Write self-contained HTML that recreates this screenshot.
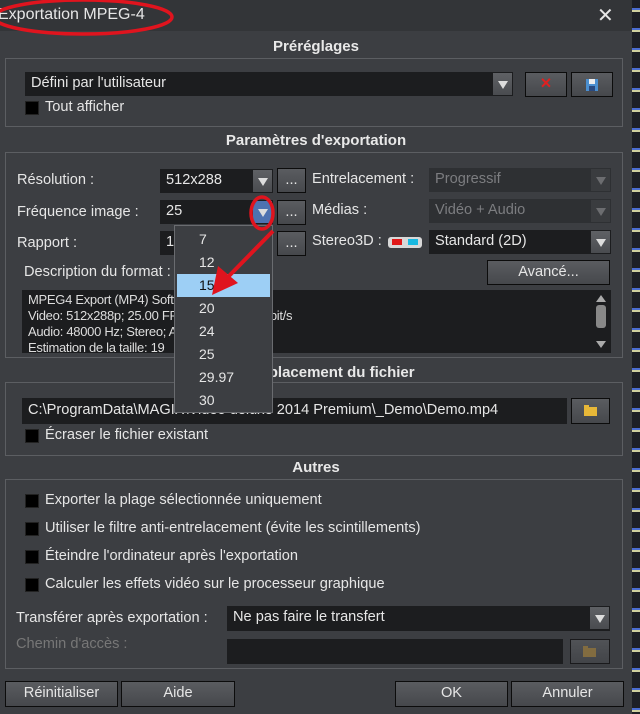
<!DOCTYPE html>
<html><head><meta charset="utf-8"><style>
*{box-sizing:border-box;margin:0;padding:0}
body{width:640px;height:714px;background:#1d1f26;position:relative;overflow:hidden;font-family:"Liberation Sans Narrow","Liberation Sans",sans-serif;font-size:14.6px;color:#e6e6e6}
.a{position:absolute}
#dlg{left:0;top:0;width:632px;height:714px;background:#3c3e42}
#tb{left:0;top:0;width:632px;height:31px;background:#333538}
.h{position:absolute;left:0;width:632px;text-align:center;font-weight:bold;font-size:15px;color:#e8e8e8}
.g{position:absolute;left:5px;width:618px;border:1px solid #5c5e62}
.in{position:absolute;background:#1c1d1f;color:#e6e6e6;padding-left:6px;line-height:23px;height:24px;white-space:nowrap;overflow:hidden}
.dis{background:#2e3033;color:#7c7d80}
.ar{position:absolute;top:1px;right:1px;width:19px;height:22px;background:linear-gradient(#5f6165,#4a4c50);}
.ar:after{content:"";position:absolute;left:5px;top:8px;border-left:5px solid transparent;border-right:5px solid transparent;border-top:8px solid #ddd}
.dis .ar{background:#3a3c3f}.dis .ar:after{border-top-color:#6c6d70}
.bt{position:absolute;background:linear-gradient(#5a5c60,#46484c);border:1px solid #0c0c0c;color:#e6e6e6;text-align:center;line-height:22px;height:25px}
.cb{position:absolute;width:14px;height:14px;background:#000;border:1px solid #222}
.l{position:absolute;white-space:nowrap}
</style></head><body>
<div class="a" style="left:632px;top:0;width:8px;height:714px;background:repeating-linear-gradient(#1d1f26 0 8px,#4a6cd0 8px 10px,#d0d0a0 10px 12px,#1d1f26 12px 20px)"></div>
<div id="dlg" class="a"></div>
<div id="tb" class="a"></div>
<div class="l" style="left:-2px;top:6px;font-size:16px">Exportation MPEG-4</div>
<div class="l" style="left:597px;top:3px;font-size:20px;font-family:'Liberation Sans'">✕</div>

<div class="h" style="top:38px">Préréglages</div>
<div class="g" style="top:58px;height:69px"></div>
<div class="in" style="left:25px;top:72px;width:488px">Défini par l'utilisateur<div class="ar"></div></div>
<div class="bt" style="left:525px;top:72px;width:42px;color:#e02020;font-family:'Liberation Sans';font-weight:bold">✕</div>
<div class="bt" style="left:571px;top:72px;width:42px"><svg width="14" height="14" style="margin-top:5px"><rect x="1" y="1" width="12" height="12" fill="#4b8fd0"/><rect x="4" y="1" width="6" height="5" fill="#eee"/><rect x="4" y="8" width="6" height="5" fill="#2a4a80"/></svg></div>
<div class="cb" style="left:25px;top:101px"></div><div class="l" style="left:45px;top:99px">Tout afficher</div>

<div class="h" style="top:132px">Paramètres d'exportation</div>
<div class="g" style="top:152px;height:206px"></div>

<div class="l" style="left:17px;top:172px">Résolution :</div>
<div class="in" style="left:160px;top:169px;width:113px">512x288<div class="ar"></div></div>
<div class="bt" style="left:277px;top:168px;width:29px">...</div>
<div class="l" style="left:312px;top:171px">Entrelacement :</div>
<div class="in dis" style="left:429px;top:168px;width:182px">Progressif<div class="ar"></div></div>

<div class="l" style="left:17px;top:204px">Fréquence image :</div>
<div class="in" style="left:160px;top:200px;width:113px">25<div class="ar" style="background:#4e72b0"></div></div>
<div class="bt" style="left:277px;top:200px;width:29px">...</div>
<div class="l" style="left:312px;top:202px">Médias :</div>
<div class="in dis" style="left:429px;top:199px;width:182px">Vidéo + Audio<div class="ar"></div></div>

<div class="l" style="left:17px;top:235px">Rapport :</div>
<div class="in" style="left:160px;top:231px;width:113px">16:9<div class="ar"></div></div>
<div class="bt" style="left:277px;top:231px;width:29px">...</div>
<div class="l" style="left:312px;top:233px">Stereo3D :</div>
<svg class="a" style="left:388px;top:236px" width="34" height="14"><rect x="0" y="1" width="34" height="11" rx="3" fill="#d8d8d8"/><rect x="4" y="3" width="10" height="6" fill="#e01818"/><rect x="20" y="3" width="10" height="6" fill="#18b8e0"/></svg>
<div class="in" style="left:429px;top:230px;width:182px">Standard (2D)<div class="ar"></div></div>

<div class="l" style="left:24px;top:264px">Description du format :</div>
<div class="bt" style="left:487px;top:260px;width:123px">Avancé...</div>
<div class="in" style="left:22px;top:290px;width:572px;height:63px;font-family:'Liberation Sans';font-size:13px;line-height:16px;padding-top:2px;color:#ddd;letter-spacing:-0.3px">MPEG4 Export (MP4) Software<br>Video: 512x288p; 25.00 FPS; H.264; 2000 kbit/s<br>Audio: 48000 Hz; Stereo; AAC<br>Estimation de la taille: 19</div>
<div class="a" style="left:593px;top:290px;width:18px;height:63px;background:#1c1d1f"></div>
<div class="a" style="left:596px;top:295px;border-left:5px solid transparent;border-right:5px solid transparent;border-bottom:7px solid #aaa"></div>
<div class="a" style="left:596px;top:305px;width:10px;height:23px;border-radius:3px;background:#888"></div>
<div class="a" style="left:596px;top:341px;border-left:5px solid transparent;border-right:5px solid transparent;border-top:7px solid #aaa"></div>

<div class="h" style="top:364px;left:14px">Emplacement du fichier</div>
<div class="g" style="top:382px;height:74px"></div>
<div class="in" style="left:22px;top:398px;width:545px;height:26px;line-height:25px">C:\ProgramData\MAGIX\Video deluxe 2014 Premium\_Demo\Demo.mp4</div>
<div class="bt" style="left:571px;top:398px;width:39px;height:26px"><svg width="14" height="12" style="margin-top:6px"><rect x="0" y="2" width="13" height="9" fill="#e8b838"/><rect x="0" y="0" width="5" height="3" fill="#e8b838"/></svg></div>
<div class="cb" style="left:25px;top:429px"></div><div class="l" style="left:45px;top:427px">Écraser le fichier existant</div>

<div class="h" style="top:459px">Autres</div>
<div class="g" style="top:479px;height:190px"></div>
<div class="cb" style="left:25px;top:494px"></div><div class="l" style="left:45px;top:492px">Exporter la plage sélectionnée uniquement</div>
<div class="cb" style="left:25px;top:522px"></div><div class="l" style="left:45px;top:520px">Utiliser le filtre anti-entrelacement (évite les scintillements)</div>
<div class="cb" style="left:25px;top:550px"></div><div class="l" style="left:45px;top:548px">Éteindre l'ordinateur après l'exportation</div>
<div class="cb" style="left:25px;top:578px"></div><div class="l" style="left:45px;top:576px">Calculer les effets vidéo sur le processeur graphique</div>
<div class="l" style="left:16px;top:610px">Transférer après exportation :</div>
<div class="in" style="left:227px;top:606px;width:383px;height:25px">Ne pas faire le transfert<div class="ar"></div></div>
<div class="l" style="left:16px;top:636px;color:#777">Chemin d'accès :</div>
<div class="in" style="left:227px;top:639px;width:336px;height:25px"></div>
<div class="bt" style="left:570px;top:639px;width:40px;height:25px;opacity:.7"><svg width="14" height="12" style="margin-top:6px"><rect x="0" y="2" width="13" height="9" fill="#a08040"/><rect x="0" y="0" width="5" height="3" fill="#a08040"/></svg></div>

<div class="bt" style="left:5px;top:681px;width:113px;height:26px">Réinitialiser</div>
<div class="bt" style="left:121px;top:681px;width:114px;height:26px">Aide</div>
<div class="bt" style="left:395px;top:681px;width:113px;height:26px">OK</div>
<div class="bt" style="left:511px;top:681px;width:113px;height:26px">Annuler</div>

<div class="a" style="left:174px;top:225px;width:99px;height:188px;background:#3c3e42;border:1px solid #6a6c70;font-family:'Liberation Sans';font-size:14px">
<div class="l" style="left:24px;top:5px">7</div>
<div class="l" style="left:24px;top:28px">12</div>
<div class="a" style="left:2px;top:48px;width:93px;height:23px;background:#9dcff5"></div>
<div class="l" style="left:24px;top:51px;color:#111">15</div>
<div class="l" style="left:24px;top:74px">20</div>
<div class="l" style="left:24px;top:97px">24</div>
<div class="l" style="left:24px;top:120px">25</div>
<div class="l" style="left:24px;top:143px">29.97</div>
<div class="l" style="left:24px;top:166px">30</div>
</div>

<svg class="a" style="left:0;top:0" width="640" height="714">
<ellipse cx="83" cy="17" rx="89" ry="17" fill="none" stroke="#e0141e" stroke-width="3.5"/>
<ellipse cx="262" cy="213" rx="11" ry="16" fill="none" stroke="#e0141e" stroke-width="3.5"/>
<line x1="273" y1="231" x2="228" y2="277" stroke="#e0141e" stroke-width="4"/>
<polygon points="212,295 218,266 238,283" fill="#e0141e"/>
</svg>
</body></html>
